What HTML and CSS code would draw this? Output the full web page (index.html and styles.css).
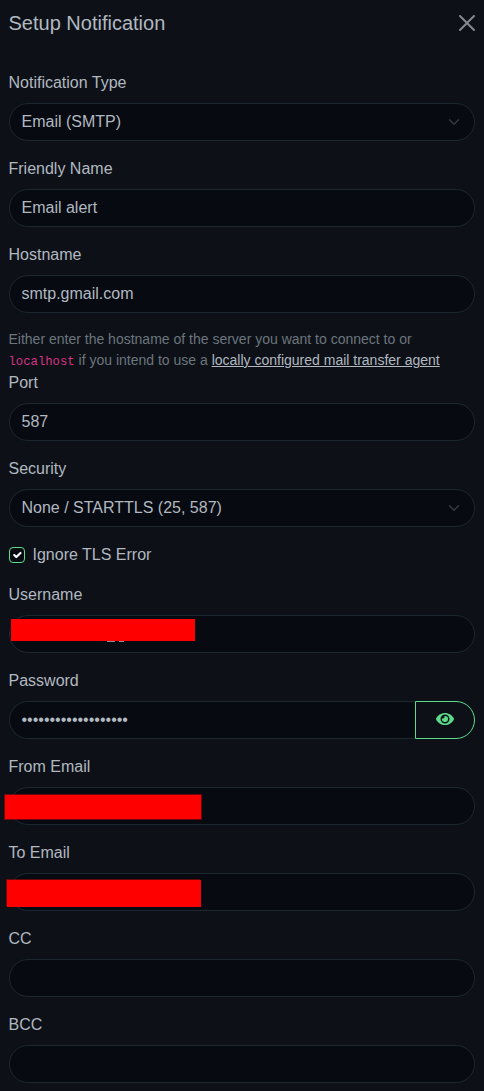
FILE: index.html
```html
<!DOCTYPE html>
<html lang="en">
<head>
<meta charset="utf-8">
<title>Setup Notification</title>
<link rel="stylesheet" href="styles.css">
</head>
<body>
<main class="dialog">
  <header class="header">
    <h5 class="title">Setup Notification</h5>
    <svg class="close" viewBox="0 0 16 16"><path d="M.293.293a1 1 0 0 1 1.414 0L8 6.586 14.293.293a1 1 0 1 1 1.414 1.414L9.414 8l6.293 6.293a1 1 0 0 1-1.414 1.414L8 9.414l-6.293 6.293a1 1 0 0 1-1.414-1.414L6.586 8 .293 1.707a1 1 0 0 1 0-1.414z"/></svg>
  </header>
  <div class="field">
    <div class="label">Notification Type</div>
    <div class="control"><span>Email (SMTP)</span><svg class="chevron" viewBox="0 0 16 16"><path d="m2 5 6 6 6-6"/></svg></div>
  </div>
  <div class="field">
    <div class="label">Friendly Name</div>
    <div class="control">Email alert</div>
  </div>
  <div class="field hostname">
    <div class="label">Hostname</div>
    <div class="control">smtp.gmail.com</div>
    <div class="help">Either enter the hostname of the server you want to connect to or <code>localhost</code> if you intend to use a <a href="#">locally configured mail transfer agent</a></div>
  </div>
  <div class="field">
    <div class="label">Port</div>
    <div class="control">587</div>
  </div>
  <div class="field">
    <div class="label">Security</div>
    <div class="control"><span>None / STARTTLS (25, 587)</span><svg class="chevron" viewBox="0 0 16 16"><path d="m2 5 6 6 6-6"/></svg></div>
  </div>
  <div class="check">
    <span class="box"><svg viewBox="0 0 20 20"><path d="m6 10 3 3 6-6"/></svg></span>
    <span>Ignore TLS Error</span>
  </div>
  <div class="field">
    <div class="label">Username</div>
    <div class="control"><i class="mask mask-user"></i><i class="trace trace-a"></i><i class="trace trace-b"></i></div>
  </div>
  <div class="field">
    <div class="label">Password</div>
    <div class="group">
      <div class="control secret">•••••••••••••••••••</div>
      <div class="reveal"><svg viewBox="0 0 576 512"><path d="M572.52 241.4C518.29 135.59 410.93 64 288 64S57.68 135.64 3.48 241.41a32.35 32.35 0 0 0 0 29.19C57.71 376.41 165.07 448 288 448s230.32-71.64 284.52-177.41a32.35 32.35 0 0 0 0-29.19zM288 400a144 144 0 1 1 144-144 143.93 143.93 0 0 1-144 144zm0-240a95.31 95.31 0 0 0-25.31 3.79 47.85 47.85 0 0 1-66.9 66.9A95.78 95.78 0 1 0 288 160z"/></svg></div>
    </div>
  </div>
  <div class="field">
    <div class="label">From Email</div>
    <div class="control"><i class="mask mask-from"></i></div>
  </div>
  <div class="field">
    <div class="label">To Email</div>
    <div class="control"><i class="mask mask-to"></i></div>
  </div>
  <div class="field">
    <div class="label">CC</div>
    <div class="control"></div>
  </div>
  <div class="field">
    <div class="label">BCC</div>
    <div class="control"></div>
  </div>
</main>
</body>
</html>
```
FILE: styles.css
```css
* { box-sizing: border-box; }
body {
  margin: 0;
  background: #0d1117;
  color: #b1b8c0;
  font: 16px/24px "Liberation Sans", Arial, sans-serif;
}
.dialog { padding: 0 9px 0 8.5px; height: 1091px; overflow: hidden; }
.header {
  display: flex;
  align-items: center;
  justify-content: space-between;
  height: 46px;
  margin-bottom: 25px;
}
.title { margin: 0; font-size: 20px; line-height: 30px; font-weight: 400; }
.close { width: 16px; height: 16px; fill: #86888b; }
.field { margin-bottom: 16px; }
.label { margin-bottom: 8px; }
.control {
  position: relative;
  display: flex;
  align-items: center;
  justify-content: space-between;
  height: 38px;
  padding: 0 12px;
  border: 1px solid #1d2730;
  border-radius: 19px;
  background: #070a10;
}
.chevron {
  width: 16px;
  height: 12px;
  fill: none;
  stroke: #343a40;
  stroke-width: 2;
  stroke-linecap: round;
  stroke-linejoin: round;
}
.hostname { margin-bottom: 0; }
.help { margin-top: 16px; font-size: 14px; line-height: 21px; color: #6c757d; }
.help code { font: 12.25px "Liberation Mono", monospace; color: #d63384; }
.help a { color: #b1b8c0; }
.check { display: flex; align-items: center; gap: 8px; height: 24px; margin-bottom: 16px; }
.box {
  width: 16px;
  height: 16px;
  border: 1px solid #5cdd8b;
  border-radius: 4px;
  background: #070a10;
}
.box svg { display: block; width: 14px; height: 14px; }
.box path { fill: none; stroke: #fff; stroke-width: 3; stroke-linecap: round; stroke-linejoin: round; }
.group { display: flex; }
.secret { flex: 1; border-right: 0; border-radius: 19px 0 0 19px; }
.reveal {
  display: flex;
  align-items: center;
  justify-content: center;
  width: 60px;
  height: 38px;
  padding-bottom: 2px;
  border: 1px solid #5cdd8b;
  border-radius: 0 19px 19px 0;
}
.reveal svg { width: 18px; height: 16px; fill: #5cdd8b; }
.mask { position: absolute; background: #f00; }
.mask-user { left: 1px; top: 3px; width: 184px; height: 22px; }
.mask-from { left: -5px; top: 7px; width: 196px; height: 24px; box-shadow: 0 0 0 1px rgba(255, 0, 0, .4); }
.mask-to { left: -3px; top: 6px; width: 194px; height: 27px; box-shadow: -1px -1px 0 rgba(255, 0, 0, .4); }
.trace { position: absolute; top: 25px; height: 1px; background: #898f96; }
.trace-a { left: 97px; width: 8px; }
.trace-b { left: 109px; width: 5px; }
```
